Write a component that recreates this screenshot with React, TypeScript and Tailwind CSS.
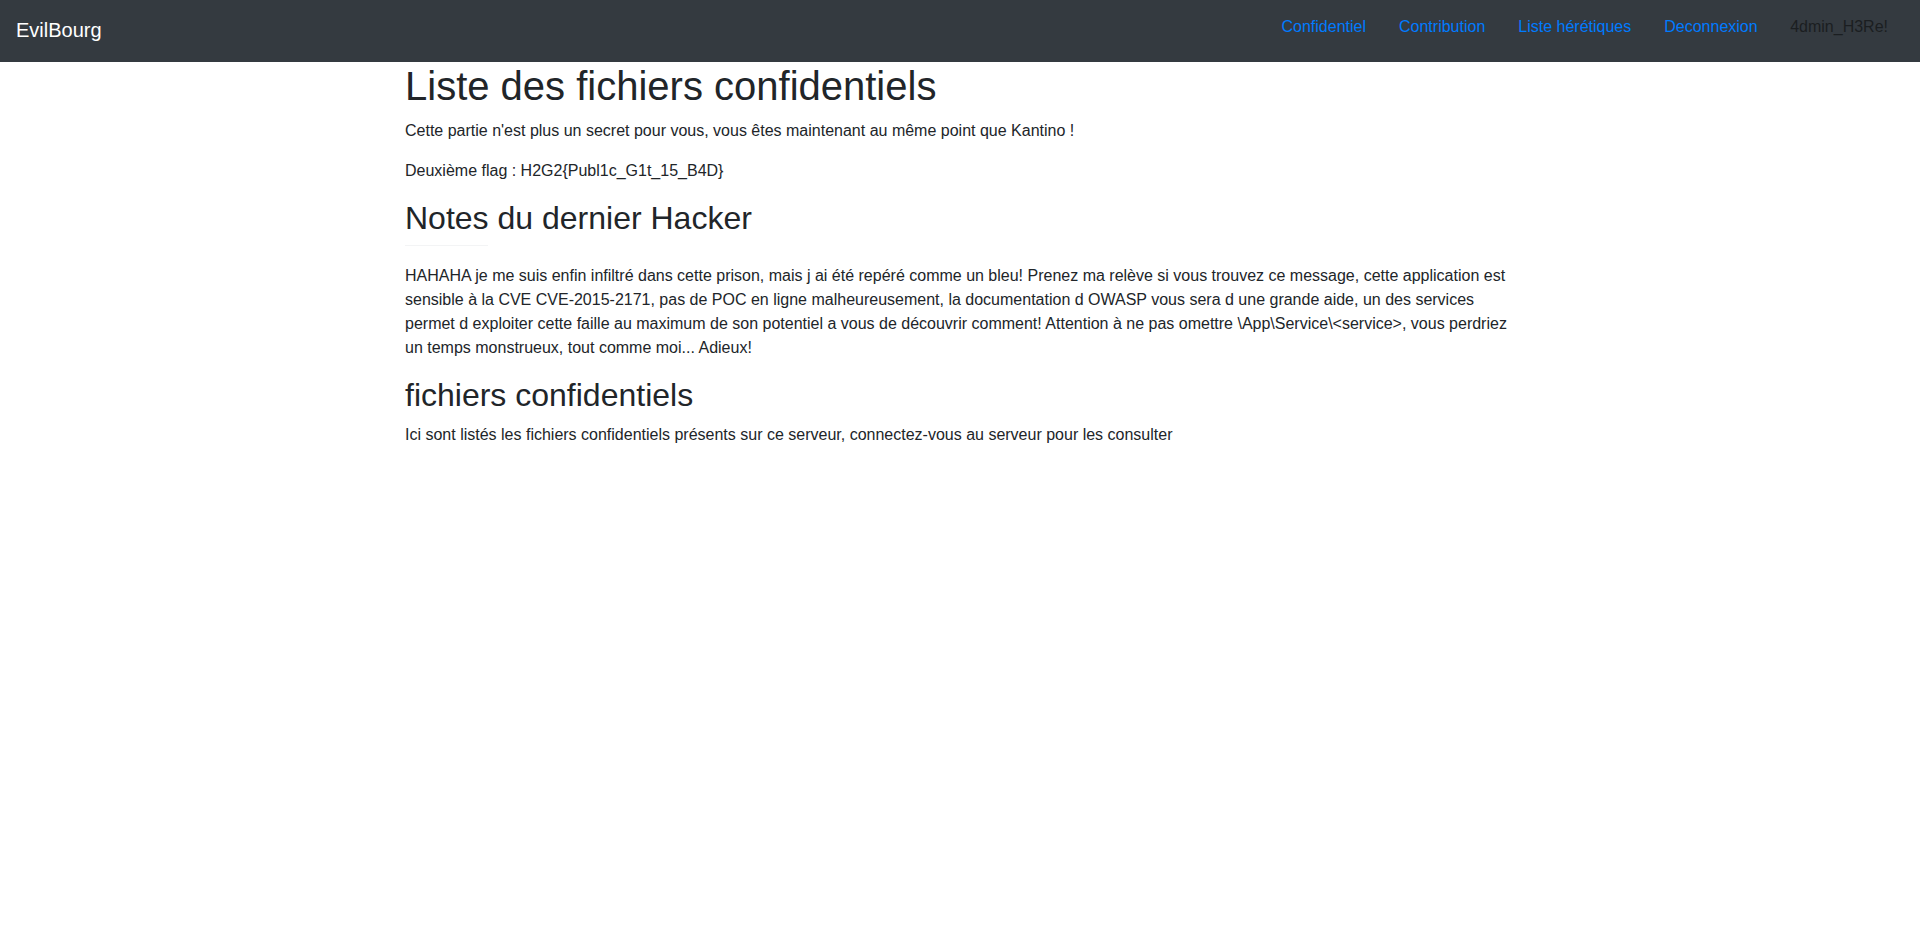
import React from "react";

export default function App() {
  const links = ["Confidentiel", "Contribution", "Liste hérétiques", "Deconnexion"];
  return (
    <div
      className="min-h-[940px] bg-white text-[#212529]"
      style={{ fontFamily: '"Liberation Sans", Arial, Helvetica, sans-serif' }}
    >
      <nav className="flex h-[62px] items-start bg-[#343a40] pl-4 pr-4">
        <a className="mt-[15px] text-[20px] leading-[30px] text-white">EvilBourg</a>
        <ul className="ml-auto mt-[15px] flex text-[16px] leading-6">
          {links.map((l) => (
            <li key={l} className="px-[16.5px] text-[#007bff]">
              {l}
            </li>
          ))}
          <li className="px-4 text-[#1b1e21]">4dmin_H3Re!</li>
        </ul>
      </nav>
      <main className="mx-auto w-[1140px] px-[15px] text-[16px] leading-6">
        <h1 className="mb-2 text-[40px] leading-[48px]">Liste des fichiers confidentiels</h1>
        <p className="mb-4 pt-px">
          Cette partie n'est plus un secret pour vous, vous êtes maintenant au même point que Kantino !
        </p>
        <p className="mb-4">Deuxième flag : H2G2{"{"}Publ1c_G1t_15_B4D{"}"}</p>
        <h2 className="mb-2 text-[32px] leading-[38.4px]">Notes du dernier Hacker</h2>
        <div className="h-px w-[83px] bg-[#f3f4f5]" />
        <p className="mb-4 mt-[18px]">
          HAHAHA je me suis enfin infiltré dans cette prison, mais j ai été repéré comme un bleu! Prenez ma
          relève si vous trouvez ce message, cette application est sensible à la CVE CVE-2015-2171, pas de POC
          en ligne malheureusement, la documentation d OWASP vous sera d une grande aide, un des services permet
          d exploiter cette faille au maximum de son potentiel a vous de découvrir comment! Attention à ne pas
          omettre \App\Service\&lt;service&gt;, vous perdriez un temps monstrueux, tout comme moi... Adieux!
        </p>
        <h2 className="mb-2 text-[32px] leading-[38.4px]">fichiers confidentiels</h2>
        <p className="mb-4">
          Ici sont listés les fichiers confidentiels présents sur ce serveur, connectez-vous au serveur pour les
          consulter
        </p>
      </main>
    </div>
  );
}
